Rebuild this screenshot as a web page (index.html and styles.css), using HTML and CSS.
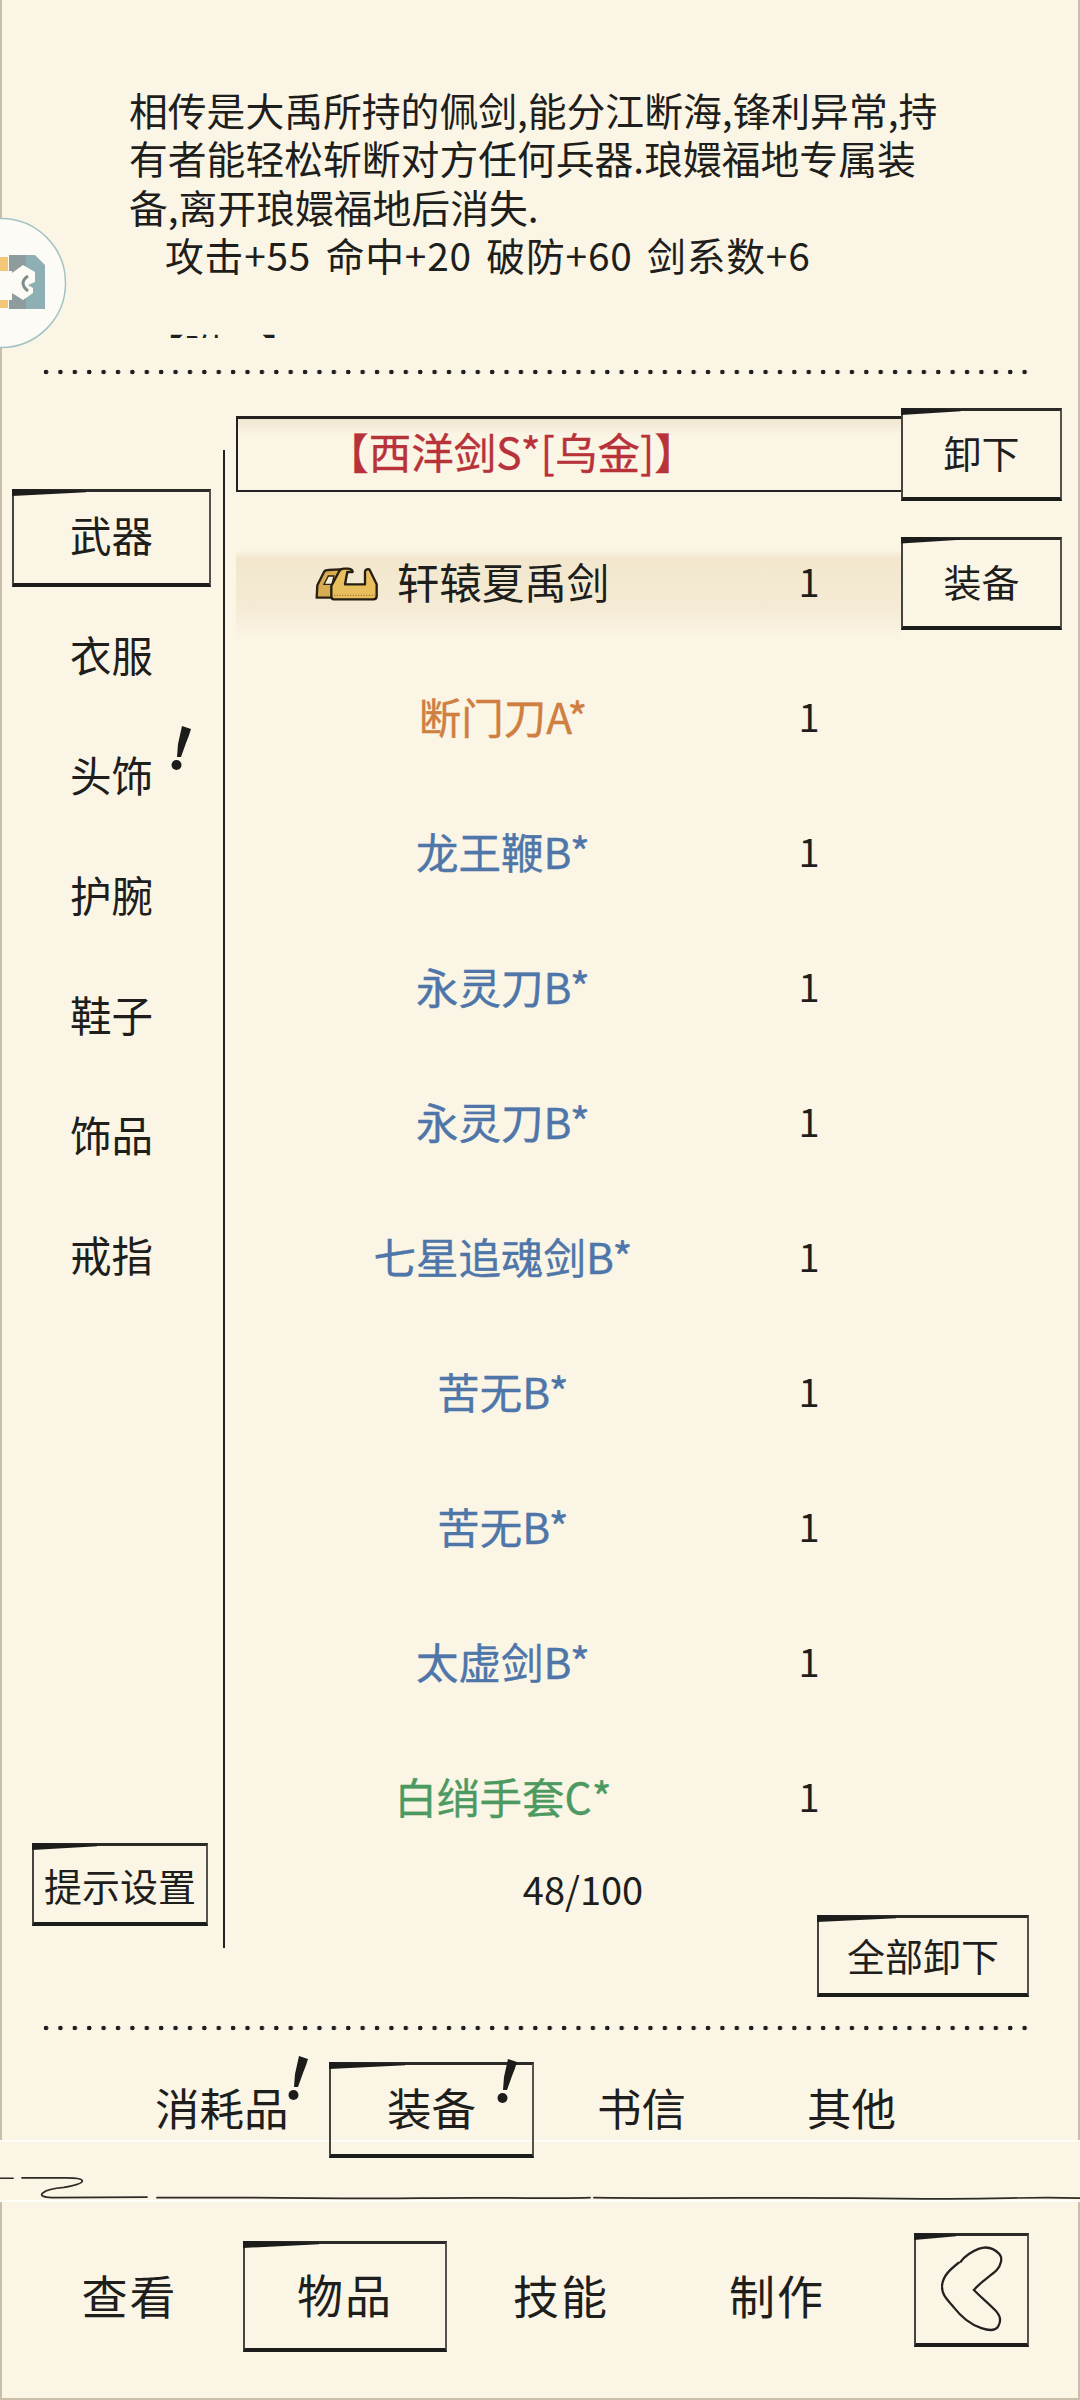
FILE: index.html
```html
<!DOCTYPE html>
<html lang="zh">
<head>
<meta charset="utf-8">
<title>物品</title>
<link rel="stylesheet" href="styles.css">
</head>
<body>
<svg class="defs" width="0" height="0" aria-hidden="true">
  <symbol id="bang" viewBox="0 0 22 46">
    <path d="M12 0 L21 3 Q19 10 16 17 L11 31 L7 31 L8 18 Z" fill="#1c1c1a"/>
    <circle cx="6.5" cy="39" r="5" fill="#1c1c1a"/>
  </symbol>
</svg>
<div class="page">
  <svg class="bubble" viewBox="0 0 68 134" aria-hidden="true">
    <circle cx="1" cy="67" r="64.5" fill="#fdfbf5" stroke="#a3c3c4" stroke-width="1.5"/>
    <rect x="0" y="41" width="8" height="51" fill="#f3c678"/>
    <path d="M35 39 L45 49 V93 H9 V39 Z" fill="#8eb0b5"/>
    <path d="M9 39 H26 V93 H9 Z" fill="#8f9c9e"/>
    <rect x="0" y="55" width="12" height="29" fill="#fdfbf5"/>
    <path d="M23 49 L35 56 V66 L28 69 L33 72 V77 L23 84 L12 77 V57 Z" fill="#fdfbf5"/>
    <path d="M28 60 Q18 67 28 75" fill="none" stroke="#7f8c8e" stroke-width="3"/>
  </svg>

  <section class="desc">
    <p class="desc-text">相传是大禹所持的佩剑,能分江断海,锋利异常,持<br>有者能轻松斩断对方任何兵器.琅嬛福地专属装<br>备,离开琅嬛福地后消失.</p>
    <p class="desc-text desc-indent">攻击+55 命中+20 破防+60 剑系数+6</p>
    <p class="desc-text desc-clip">【附二】</p>
  </section>

  <div class="dots"></div>

  <section class="equip">
    <aside class="side">
      <ul class="tabs">
        <li class="tab"><span class="sk tab-active">武器</span></li>
        <li class="tab">衣服</li>
        <li class="tab tab-flag">头饰<svg class="bang bang-side"><use href="#bang"/></svg></li>
        <li class="tab">护腕</li>
        <li class="tab">鞋子</li>
        <li class="tab">饰品</li>
        <li class="tab">戒指</li>
      </ul>
      <button class="sk btn btn-hint">提示设置</button>
    </aside>

    <div class="main">
      <div class="worn">
        <div class="worn-name">【西洋剑S*[乌金]】</div>
        <button class="sk btn btn-side">卸下</button>
      </div>

      <ul class="items">
        <li class="item item-sel">
          <span class="name"><span class="name-wrap">
            <svg class="chest" viewBox="0 0 210 150" aria-hidden="true">
              <path d="M20 125 L22 88 L42 48 Q45 42 55 42 L90 40 L70 125 Z" fill="#d8ad52" stroke="#2a2214" stroke-width="7" stroke-linejoin="round"/>
              <path d="M42 85 L55 60 H72 L66 85 Z" fill="#f7eed8" stroke="#2a2214" stroke-width="4"/>
              <path d="M72 130 Q64 130 64 120 V90 L88 45 Q92 38 102 38 H115 Q128 40 128 48 H112 L105 85 H165 V48 Q165 38 178 40 L200 85 V120 Q200 130 190 130 Z" fill="#e8bf5c" stroke="#241e12" stroke-width="7" stroke-linejoin="round"/>
              <path d="M72 118 H194" stroke="#a57f30" stroke-width="4" stroke-dasharray="4 4"/>
            </svg>轩辕夏禹剑</span></span>
          <span class="qty">1</span>
          <button class="sk btn btn-side">装备</button>
        </li>
        <li class="item"><span class="name q-a">断门刀A*</span><span class="qty">1</span></li>
        <li class="item"><span class="name q-b">龙王鞭B*</span><span class="qty">1</span></li>
        <li class="item"><span class="name q-b">永灵刀B*</span><span class="qty">1</span></li>
        <li class="item"><span class="name q-b">永灵刀B*</span><span class="qty">1</span></li>
        <li class="item"><span class="name q-b">七星追魂剑B*</span><span class="qty">1</span></li>
        <li class="item"><span class="name q-b">苦无B*</span><span class="qty">1</span></li>
        <li class="item"><span class="name q-b">苦无B*</span><span class="qty">1</span></li>
        <li class="item"><span class="name q-b">太虚剑B*</span><span class="qty">1</span></li>
        <li class="item"><span class="name q-c">白绡手套C*</span><span class="qty">1</span></li>
      </ul>

      <div class="count">48/100</div>
      <button class="sk btn btn-all">全部卸下</button>
    </div>
  </section>

  <div class="dots"></div>

  <section class="bag">
    <div class="band">
      <svg class="band-line" viewBox="0 0 1080 60" preserveAspectRatio="none" aria-hidden="true">
        <path d="M0 37.5 H13 M22 37 H66 C86 37 90 42 64 47 C42 49 33 57 52 57.5 L147 57 M157 57.6 C300 57 330 59 420 58 S560 59 590 57.6 M594 57.6 C700 59 790 56.6 900 58.5 S1010 56 1080 58" fill="none" stroke="#2c2b26" stroke-width="1.8" stroke-linecap="round"/>
      </svg>
    </div>
    <div class="bag-tabs">
      <span class="bag-tab bag-use">消耗品<svg class="bang bang-use"><use href="#bang"/></svg></span>
      <span class="sk bag-tab bag-equip">装备<svg class="bang bang-equip"><use href="#bang"/></svg></span>
      <span class="bag-tab bag-mail">书信</span>
      <span class="bag-tab bag-other">其他</span>
    </div>
  </section>

  <nav class="nav">
    <span class="nav-item nav-view">查看</span>
    <span class="sk nav-item nav-bag">物品</span>
    <span class="nav-item nav-skill">技能</span>
    <span class="nav-item nav-make">制作</span>
    <button class="sk nav-back" aria-label="返回">
      <svg class="back-icon" viewBox="0 0 66 90" preserveAspectRatio="none" aria-hidden="true">
        <path d="M19 17 C10 24 2 30 1 41 C1 50 6 54 13 62 C21 72 30 80 43 84 C52 87 58 87 61 82 C64 77 63 71 58 66 C50 58 42 52 35 45 C42 37 51 32 59 25 C64 20 66 12 62 8 C56 2 48 0 40 3 C32 6 25 11 21 16" fill="none" stroke="#23221f" stroke-width="2.4" stroke-linecap="round"/>
      </svg>
    </button>
  </nav>
</div>
</body>
</html>
```

FILE: styles.css
```css
* { box-sizing: border-box; }
html, body { margin: 0; padding: 0; }
body {
  width: 1080px;
  height: 2400px;
  overflow: hidden;
  background: #fbf5e6;
  color: #1e1e1c;
  font-family: "Noto Sans CJK SC", "Noto Sans", sans-serif;
}
ul, p { margin: 0; padding: 0; list-style: none; }
button { font: inherit; color: inherit; background: none; padding: 0; }
.defs { position: absolute; }

.page {
  position: relative;
  width: 1080px;
  height: 2400px;
  display: flex;
  flex-direction: column;
  overflow: hidden;
  box-shadow: inset 2px 0 #c9bfa9, inset -2px 0 #c9bfa9, inset 0 -2px #c9bfa9;
}

/* hand-drawn box */
.sk {
  position: relative;
  display: flex;
  align-items: center;
  justify-content: center;
  border-style: solid;
  border-width: 3px 2px 4px;
  border-color: #2b2a27 #55534d #1c1c1a #45443f;
}
.sk::before {
  content: "";
  position: absolute;
  left: -2px;
  top: -3px;
  width: 38%;
  height: 7px;
  background: #1c1c1a;
  clip-path: polygon(0 0, 100% 25%, 100% 45%, 0 100%);
}

/* floating bubble */
.bubble {
  position: absolute;
  left: 0;
  top: 216px;
  width: 68px;
  height: 134px;
  z-index: 2;
}

/* description */
.desc {
  height: 338px;
  padding: 85px 0 0 129px;
  overflow: hidden;
  flex: none;
}
.desc-text {
  font-size: 38.8px;
  line-height: 48.4px;
  white-space: nowrap;
}
.desc-indent { padding-left: 36px; letter-spacing: 0.8px; word-spacing: 5px; }
.desc-clip { margin-top: 47.5px; padding-left: 16px; }

.dots {
  flex: none;
  height: 6px;
  margin: 31px 44px 0 43px;
  background-image: radial-gradient(circle at 3px 3px, #1e1e1c 2px, transparent 2.6px);
  background-size: 14.4px 6px;
  background-repeat: repeat-x;
}
.equip + .dots { margin-top: 0; }

/* equipment area */
.equip {
  flex: none;
  display: flex;
  height: 1650px;
}
.side {
  flex: none;
  width: 225px;
  height: 1498px;
  margin-top: 75px;
  padding: 28px 0 22px;
  border-right: 2px solid #23221f;
  display: flex;
  flex-direction: column;
}
.tabs { flex: 1; }
.tab {
  position: relative;
  height: 120px;
  width: 199px;
  margin-left: 12px;
  padding-bottom: 6px;
  display: flex;
  align-items: center;
  justify-content: center;
  font-size: 41.5px;
  line-height: 1;
}
.tab-active {
  width: 199px;
  height: 98px;
  margin-bottom: -6px;
  padding-bottom: 6px;
}
.bang { position: absolute; width: 22px; height: 46px; }
.bang-side { left: 158px; top: 8px; }

.btn-hint {
  width: 176px;
  height: 83px;
  margin-left: 32px;
  font-size: 38px;
  flex: none;
}

.main {
  flex: none;
  width: 826px;
  margin-left: 11px;
  padding-top: 33px;
}
.worn {
  display: grid;
  grid-template-columns: 665px 161px;
  height: 92px;
}
.worn-name {
  height: 76px;
  margin-top: 8px;
  border: 2px solid #23221f;
  border-right: none;
  border-top-width: 3px;
  background: linear-gradient(#efe6d1, #fbf5e6 16px);
  color: #b8323a;
  font-size: 42.5px;
  -webkit-text-stroke: 0.4px #b8323a;
  display: flex;
  align-items: center;
  justify-content: center;
  padding: 0 116px 8px 0;
  white-space: nowrap;
}
.btn-side {
  width: 161px;
  height: 93px;
  font-size: 38px;
  padding-bottom: 5px;
}

.items { margin-top: 15.5px; }
.item {
  height: 135px;
  display: grid;
  grid-template-columns: 534px 78px 53px 161px;
  align-items: center;
}
.item-sel {
  background-image: linear-gradient(to bottom, transparent 34px, #f2e7cd 42px, #f5ebd5 92px, #f9f1e0 112px, #fbf5e6 124px);
  background-size: 665px 100%;
  background-repeat: no-repeat;
}
.item-sel .btn-side { grid-column: 4; }
.name {
  text-align: center;
  white-space: nowrap;
  font-size: 42.5px;
  padding-bottom: 6px;
}
.name-wrap { position: relative; display: inline-block; }
.chest {
  position: absolute;
  right: 100%;
  margin-right: 17px;
  top: 6px;
  width: 70px;
  height: 50px;
}
.qty { text-align: center; font-size: 38px; padding-bottom: 6px; }
.q-a { color: #cf7f3f; -webkit-text-stroke: 0.4px #cf7f3f; }
.q-b { color: #4e76a9; -webkit-text-stroke: 0.4px #4e76a9; }
.q-c { color: #4c9a61; -webkit-text-stroke: 0.4px #4c9a61; }

.count {
  width: 694px;
  height: 37px;
  margin-top: 4px;
  line-height: 37px;
  text-align: center;
  font-size: 38px;
}
.btn-all {
  width: 212px;
  height: 82px;
  margin: 8.5px 0 0 581px;
  font-size: 38px;
  padding-bottom: 3px;
}

/* bag tabs */
.bag {
  position: relative;
  flex: none;
  height: 171px;
}
.band {
  position: absolute;
  left: 0;
  right: 0;
  top: 109px;
  height: 62px;
  background: #fbf5e6;
  border-top: 2px solid #fffdf7;
  border-bottom: 2px solid #fffdf7;
}
.band-line { display: block; width: 1080px; height: 58px; }
.bag-tabs {
  position: relative;
  display: flex;
  height: 96px;
  margin-top: 31px;
  padding-left: 155px;
  align-items: center;
  font-size: 44.5px;
}
.bag-tab { position: relative; white-space: nowrap; margin-bottom: 7px; }
.bag-use { width: 135px; }
.bang-use { left: 132px; top: -18px; }
.bag-equip {
  width: 205px;
  height: 96px;
  margin: 0 0 0 39px;
  padding-bottom: 7px;
}
.bang-equip { left: 165px; top: -6px; }
.bag-mail { margin-left: 63px; width: 89px; }
.bag-other { margin-left: 121px; }

/* bottom nav */
.nav {
  position: relative;
  flex: 1;
  display: flex;
  align-items: flex-start;
  padding-left: 16px;
  font-size: 46px;
  letter-spacing: 2px;
}
.nav-item {
  height: 111px;
  margin-top: 39px;
  padding-bottom: 6px;
  display: flex;
  align-items: center;
  justify-content: center;
  white-space: nowrap;
}
.nav-view { width: 227px; }
.nav-bag { width: 204px; }
.nav-skill { width: 228px; }
.nav-make { width: 204px; }
.nav-back {
  width: 115px;
  height: 114px;
  margin: 31px 0 0 35px;
}
.back-icon { width: 62px; height: 88px; }
```
